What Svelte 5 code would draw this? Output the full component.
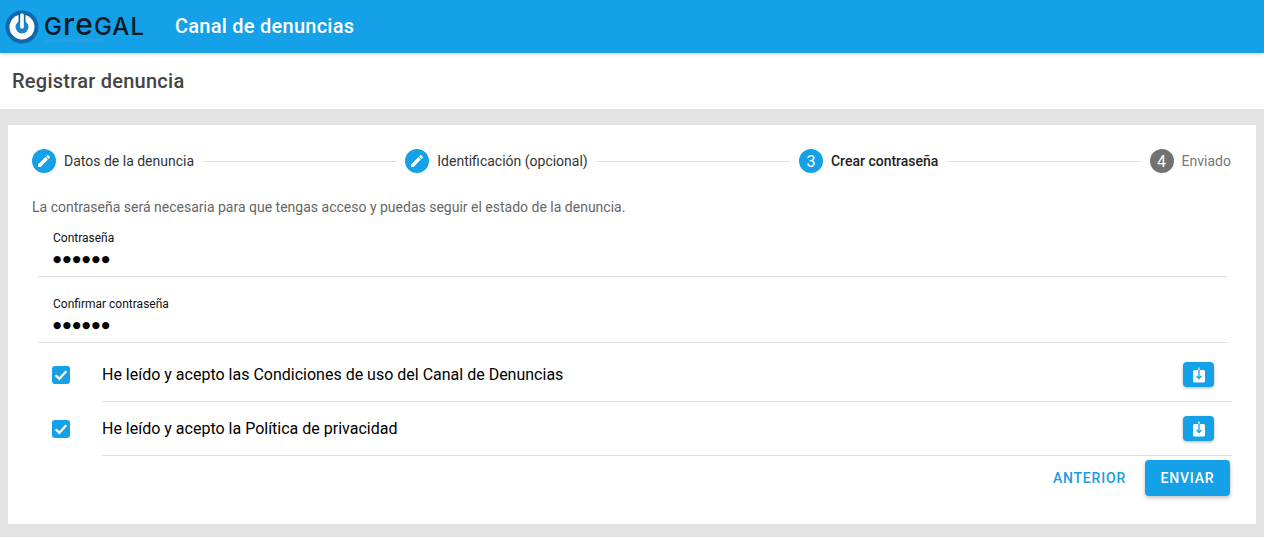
<script lang="ts">
    const steps = [
        { label: 'Datos de la denuncia', state: 'done' },
        { label: 'Identificación (opcional)', state: 'done' },
        { label: 'Crear contraseña', state: 'active', n: 3 },
        { label: 'Enviado', state: 'off', n: 4 }
    ];
    const fields = ['Contraseña', 'Confirmar contraseña'];
    const terms = [
        'He leído y acepto las Condiciones de uso del Canal de Denuncias',
        'He leído y acepto la Política de privacidad'
    ];
</script>

<header class="topbar">
    <div class="logo">
        <svg width="34" height="34" viewBox="0 0 34 34">
            <circle cx="17" cy="17" r="16.5" fill="#0f68aa" />
            <circle cx="17" cy="17" r="12.5" fill="#fff" />
            <circle cx="17" cy="17" r="6.5" fill="#1a83c9" />
            <path d="M17 3v9" stroke="#0f68aa" stroke-width="7" />
            <path d="M17 5v12" stroke="#fff" stroke-width="3.6" stroke-linecap="round" />
        </svg>
        <span class="wordmark">G<span class="lc">re</span>GAL</span>
        <span class="tagline">soluciones informáticas</span>
    </div>
    <h1>Canal de denuncias</h1>
</header>

<div class="titlebar">Registrar denuncia</div>

<main class="page">
    <section class="card">
        <div class="stepper">
            {#each steps as step, i}
                <div class="step {step.state}">
                    <span class="badge">
                        {#if step.n}
                            {step.n}
                        {:else}
                            <svg width="16" height="16" viewBox="0 0 24 24"><path fill="#fff" d="M20.71 7.04c.39-.39.39-1.04 0-1.41l-2.34-2.34c-.37-.39-1.02-.39-1.41 0l-1.84 1.83 3.75 3.75M3 17.25V21h3.75L17.81 9.93l-3.75-3.75L3 17.25z" /></svg>
                        {/if}
                    </span>
                    <span class="step-label">{step.label}</span>
                </div>
                {#if i < steps.length - 1}<div class="connector"></div>{/if}
            {/each}
        </div>

        <p class="hint">La contraseña será necesaria para que tengas acceso y puedas seguir el estado de la denuncia.</p>

        <div class="fields">
            {#each fields as field}
                <div class="field">
                    <span class="field-label">{field}</span>
                    <span class="dots">●●●●●●</span>
                </div>
            {/each}
        </div>

        <div class="terms">
            {#each terms as term}
                <div class="term">
                    <span class="check">
                        <svg width="18" height="18" viewBox="0 0 18 18"><path fill="none" stroke="#fff" stroke-width="2.3" d="M3.6 9.3l3.7 3.6 7-7.6" /></svg>
                    </span>
                    <div class="term-row">
                        <span>{term}</span>
                        <button class="download" aria-label="Descargar">
                            <svg width="14" height="18" viewBox="0 0 14 18">
                                <rect x="1" y="4" width="12" height="12.5" rx="1.5" fill="#fff" />
                                <path d="M7 1.5V5" stroke="#fff" stroke-width="1.2" />
                                <path d="M7 4v8.5M4.5 10L7 12.6 9.5 10" fill="none" stroke="#14a1e8" stroke-width="1.3" />
                            </svg>
                        </button>
                    </div>
                </div>
            {/each}
        </div>

        <div class="actions">
            <button class="text-btn">ANTERIOR</button>
            <button class="send">ENVIAR</button>
        </div>
    </section>
</main>

<style>
    :global(body) {
        margin: 0;
        font-family: Roboto, "Liberation Sans", sans-serif;
        background: #e3e3e3;
    }

    .topbar {
        height: 53px;
        background: #14a1e8;
        display: flex;
        align-items: center;
        position: relative;
        z-index: 1;
        box-shadow: 0 1px 4px rgba(0, 0, 0, 0.2);
    }

    .logo {
        position: relative;
        width: 175px;
        height: 53px;
        display: flex;
        align-items: center;
        padding-left: 5px;
        box-sizing: border-box;
        flex: none;
    }

    .wordmark {
        font-family: Inter, sans-serif;
        font-size: 24px;
        font-weight: 500;
        line-height: 16px;
        height: 16px;
        letter-spacing: 1.1px;
        color: #0c1a26;
        margin-left: 5px;
        white-space: nowrap;
    }

    .lc {
        font-size: 30px;
        line-height: 0;
    }

    .tagline {
        position: absolute;
        left: 45px;
        top: 37px;
        font-size: 5.5px;
        line-height: 6px;
        color: #4f9fd4;
    }

    h1 {
        margin: 0 0 2px;
        font-size: 20px;
        font-weight: 500;
        letter-spacing: 0.25px;
        color: #fff;
    }

    .titlebar {
        height: 56px;
        background: #fff;
        padding-left: 12px;
        font-size: 20px;
        font-weight: 500;
        letter-spacing: 0.25px;
        color: #444;
        line-height: 57px;
    }

    .page {
        padding: 16px 8px 13px;
    }

    .card {
        background: #fff;
        height: 399px;
        padding: 0 24px;
        box-sizing: border-box;
    }

    .stepper {
        display: flex;
        align-items: center;
        height: 72px;
        margin-right: 1px;
    }

    .step {
        display: flex;
        align-items: center;
        gap: 8px;
        font-size: 14px;
        color: #333;
    }

    .step.active {
        font-weight: 500;
        color: #222;
    }

    .step.off {
        color: #777;
    }

    .badge {
        width: 24px;
        height: 24px;
        border-radius: 50%;
        background: #14a1e8;
        color: #fff;
        display: flex;
        align-items: center;
        justify-content: center;
        font-size: 16px;
        font-weight: 400;
    }

    .off .badge {
        background: #727272;
    }

    .connector {
        flex: 1;
        height: 1px;
        background: #ddd;
        margin: 0 9px;
    }

    .hint {
        margin: 0;
        font-size: 14px;
        line-height: 20px;
        color: #666;
    }

    .fields {
        margin: 0 5px 0 6px;
        padding-top: 14px;
    }

    .field {
        display: flex;
        flex-direction: column;
        height: 45px;
        padding-left: 15px;
        border-bottom: 1px solid #ddd;
        margin-bottom: 20px;
    }

    .field-label {
        font-size: 12px;
        line-height: 14px;
        color: #111;
    }

    .dots {
        font-family: "DejaVu Sans", sans-serif;
        font-size: 9.5px;
        letter-spacing: 1.4px;
        line-height: 20px;
        margin-top: 4px;
        color: #000;
    }

    .terms {
        margin-top: -15px;
    }

    .term {
        display: flex;
        align-items: center;
        height: 54px;
    }

    .check {
        width: 18px;
        height: 18px;
        margin-left: 20px;
        margin-right: 32px;
        border-radius: 3px;
        background: #14a1e8;
        display: flex;
        align-items: center;
        justify-content: center;
        flex: none;
    }

    .term-row {
        flex: 1;
        height: 100%;
        border-bottom: 1px solid #ddd;
        box-sizing: border-box;
        display: flex;
        align-items: center;
        justify-content: space-between;
        padding-right: 18px;
        font-size: 16px;
        color: #000;
    }

    .download {
        width: 31px;
        height: 25px;
        padding: 0;
        border: none;
        border-radius: 4px;
        background: #14a1e8;
        box-shadow: 0 1px 3px rgba(0, 0, 0, 0.3);
        display: flex;
        align-items: center;
        justify-content: center;
    }

    .actions {
        display: flex;
        justify-content: flex-end;
        align-items: center;
        gap: 19px;
        padding: 4px 2px 0 0;
    }

    .actions button {
        font-family: inherit;
        font-size: 14px;
        font-weight: 500;
        letter-spacing: 0.8px;
        border: none;
        border-radius: 4px;
        height: 36px;
    }

    .text-btn {
        background: none;
        color: #1b9be0;
        padding: 0;
    }

    .send {
        width: 85px;
        padding: 0;
        background: #14a1e8;
        color: #fff;
        box-shadow: 0 2px 4px rgba(0, 0, 0, 0.25);
    }
</style>
